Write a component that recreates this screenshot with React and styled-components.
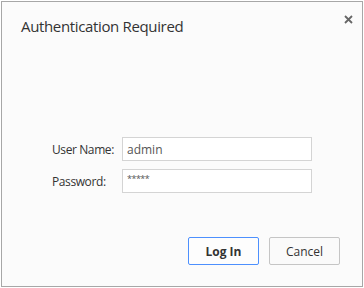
import React from "react";
import styled, { createGlobalStyle } from "styled-components";

const Global = createGlobalStyle`
  html, body { margin: 0; padding: 0; background: #ffffff; }
  body { font-family: "Open Sans", "Noto Sans", sans-serif; color: #333; }
`;

const Dialog = styled.div`
  box-sizing: border-box;
  margin: 1px 0 0 1px;
  width: 362px;
  height: 286px;
  border: 1px solid #a7a7a7;
  background: #fbfbfb;
  display: flex;
  flex-direction: column;
`;

const Header = styled.div`
  display: flex;
  justify-content: space-between;
  align-items: flex-start;
  padding: 13px 9px 0 19px;
  height: 40px;
  box-sizing: border-box;
`;

const Title = styled.div`
  font-size: 15px;
  letter-spacing: -0.35px;
  color: #333;
  line-height: 22px;
`;

const Close = styled.button`
  border: 0;
  background: none;
  padding: 0;
  width: 9px;
  height: 9px;
  display: flex;
  cursor: pointer;
`;

const Form = styled.div`
  display: grid;
  grid-template-columns: 70px 190px;
  row-gap: 8px;
  margin: 95px 0 0 50px;
  align-items: center;
`;

const Label = styled.label`
  font-size: 12px;
  letter-spacing: -0.4px;
  color: #333;
`;

const Input = styled.input`
  box-sizing: border-box;
  height: 24px;
  width: 190px;
  border: 1px solid #d4d4d4;
  background: #fff;
  padding: ${(p) => (p.$masked ? "0 4px 5px" : "0 4px")};
  font-family: inherit;
  font-size: ${(p) => (p.$masked ? "9px" : "12px")};
  letter-spacing: ${(p) => (p.$masked ? "-0.5px" : "0")};
  color: #555;
  outline: none;
`;

const Footer = styled.div`
  margin-top: auto;
  display: flex;
  justify-content: flex-end;
  gap: 10px;
  padding: 0 22px 21px 0;
`;

const Button = styled.button`
  box-sizing: border-box;
  width: 71px;
  height: 28px;
  background: ${(p) => (p.$primary ? "#fdfdfd" : "#fafafa")};
  border: 1px solid ${(p) => (p.$primary ? "#4d90fe" : "#c5c5c5")};
  border-radius: 2px;
  font-family: inherit;
  font-size: 12px;
  font-weight: ${(p) => (p.$primary ? 700 : 400)};
  color: #333;
  padding: 0;
`;

export default function App() {
  return (
    <>
      <Global />
      <Dialog>
        <Header>
          <Title>Authentication Required</Title>
          <Close aria-label="Close">
            <svg width="9" height="9" viewBox="0 0 9 9">
              <path d="M1 1 L8 8 M8 1 L1 8" stroke="#666" strokeWidth="1.8" />
            </svg>
          </Close>
        </Header>
        <Form>
          <Label>User Name:</Label>
          <Input defaultValue="admin" />
          <Label>Password:</Label>
          <Input $masked defaultValue="*****" />
        </Form>
        <Footer>
          <Button $primary>Log In</Button>
          <Button>Cancel</Button>
        </Footer>
      </Dialog>
    </>
  );
}
